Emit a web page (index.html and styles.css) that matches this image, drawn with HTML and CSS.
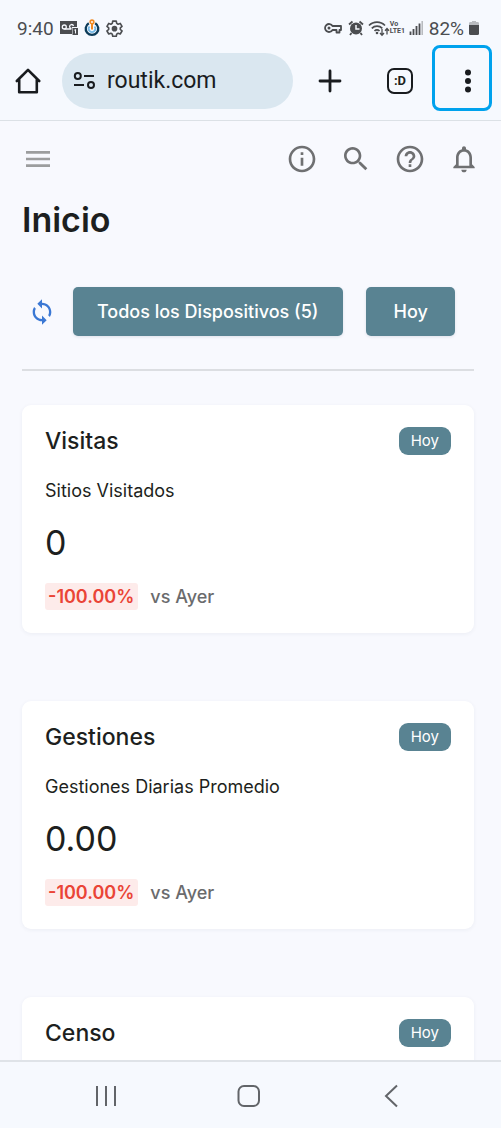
FILE: index.html
```html
<!DOCTYPE html>
<html lang="es">
<head>
<meta charset="utf-8">
<meta name="viewport" content="width=device-width, initial-scale=1">
<title>Inicio</title>
<link rel="stylesheet" href="styles.css">
</head>
<body>
<div class="phone">
  <div class="status">
    <div class="status-group">
      <span class="clock">9:40</span>
      <svg width="18" height="16" viewBox="0 0 18 16" aria-hidden="true"><path fill="#4b4d50" d="M0 1h17v6h-5v7H0z"/><circle cx="4.300" cy="7" r="2" fill="none" stroke="#f6f9fe" stroke-width="1.300"/><path d="M4.300 9h7M11.500 8.500a2 2 0 1 1 2-2.500" fill="none" stroke="#f6f9fe" stroke-width="1.300"/><path fill="#4b4d50" d="M12.500 8H18v7h-5.500z"/><path d="M14.300 10.200l1.200-.7v4" stroke="#f6f9fe" fill="none"/></svg>
      <svg width="16" height="18" viewBox="0 0 16 18" aria-hidden="true"><path d="M4.800 4.200a6.300 6.300 0 1 0 6.400 0" fill="none" stroke="#0c3b59" stroke-width="2.300"/><path d="M5.500 7.500a3.300 3.300 0 1 0 5 0" fill="none" stroke="#75b9e6" stroke-width="1.800"/><path d="M8 10.500V4" stroke="#f08a24" stroke-width="2"/><circle cx="8" cy="3" r="1.800" fill="#fff" stroke="#f08a24" stroke-width="1.700"/></svg>
      <svg width="17" height="17" viewBox="0 0 24 24" aria-hidden="true"><path fill="none" stroke="#4b4d50" stroke-width="2.300" stroke-linejoin="round" d="M9.500 1.500h5l.6 3.200 2 1.200 3-1.100 2.500 4.300-2.400 2.100v2.200l2.400 2.100-2.500 4.300-3-1.100-2 1.200-.6 3.200h-5l-.6-3.200-2-1.200-3 1.100-2.500-4.300 2.400-2.100v-2.200L1.400 9.100l2.500-4.300 3 1.100 2-1.200z"/><circle cx="12" cy="12.200" r="4" fill="#4b4d50"/></svg>
    </div>
    <div class="status-group status-right">
      <svg class="key" width="18" height="16" viewBox="0 0 18 16" aria-hidden="true"><path fill="none" stroke="#4b4d50" stroke-width="1.800" stroke-linejoin="round" d="M8.500 6H17v4h-1.500v2.500h-3V10h-4a4 4 0 1 1 0-4z"/><circle cx="5" cy="8" r="1.500" fill="#4b4d50"/></svg>
      <svg width="16" height="16" viewBox="0 0 16 16" aria-hidden="true"><circle cx="8" cy="8.500" r="6" fill="#4b4d50"/><path d="M1 4.500L4.500 1.500M15 4.500L11.500 1.500M3.500 13l-1.500 2M12.500 13l1.500 2" stroke="#4b4d50" stroke-width="1.800"/><path d="M8 5v4h3.500" fill="none" stroke="#f6f9fe" stroke-width="1.500"/></svg>
      <span class="network">
        <svg width="22" height="18" viewBox="0 0 22 18" aria-hidden="true"><g fill="none" stroke="#4b4d50" stroke-width="1.700"><path d="M1 6.500a11 11 0 0 1 16 0M3.800 9.300a7.300 7.300 0 0 1 10.500 0M6.500 12a3.500 3.500 0 0 1 5 0"/><path stroke-width="1.300" d="M14 10v6M12 14l2 2.200 2-2.200M19 15.500v-6M17 11.700l2-2.200 2 2.200"/></g><circle cx="9" cy="14" r="1.300" fill="#4b4d50"/></svg>
        <span class="lte"><span>Vo</span><span>LTE1</span></span>
      </span>
      <svg width="14" height="16" viewBox="0 0 14 16" aria-hidden="true"><path stroke="#4b4d50" stroke-width="1.800" d="M1.500 11.500V15M4.500 9v6M7.500 6v9M10.500 3.500V15"/><path stroke="#b5b8bc" stroke-width="1.500" d="M13.200 1v14"/></svg>
      <span class="battery">82%</span>
      <svg width="12" height="16" viewBox="0 0 12 16" aria-hidden="true"><path fill="#b9bcc0" d="M4 1h4v1h2q1 0 1 1.500V7H1V3.500Q1 2 2 2h2z"/><path fill="#4b4d50" d="M1 5h10v8.500q0 1.500-1.500 1.500h-7Q1 15 1 13.500z"/></svg>
    </div>
  </div>

  <div class="toolbar">
    <button class="tool" aria-label="Página de inicio"><svg width="28" height="28" viewBox="0 0 28 28"><path fill="none" stroke="#191c1f" stroke-width="2.600" stroke-linejoin="round" stroke-linecap="round" d="M2.800 14L14 2.800 25.200 14M5.200 12.500v12.700h17.600V12.500"/></svg></button>
    <label class="omnibox">
      <svg width="24" height="20" viewBox="0 0 24 20" aria-hidden="true"><g fill="none" stroke="#191c1f" stroke-width="2"><circle cx="4.800" cy="5" r="3"/><path d="M11 5h10M1 14h10"/><circle cx="18" cy="14" r="3"/></g></svg>
      <input class="url" type="text" value="routik.com" aria-label="Dirección">
    </label>
    <button class="tool" aria-label="Nueva pestaña"><svg width="26" height="26" viewBox="0 0 26 26"><path d="M13 3v20M3 13h20" stroke="#191c1f" stroke-width="2.800" stroke-linecap="round"/></svg></button>
    <button class="tabs" aria-label="Pestañas">:D</button>
    <button class="tool more" aria-label="Más opciones"><svg width="8" height="24" viewBox="0 0 8 24"><g fill="#191c1f"><circle cx="4" cy="3.500" r="3"/><circle cx="4" cy="12" r="3"/><circle cx="4" cy="20.500" r="3"/></g></svg></button>
  </div>

  <main class="page">
    <header class="appbar">
      <button class="icon menu" aria-label="Menú"><svg width="32" height="32" viewBox="0 0 24 24"><path fill="#9c9d9e" d="M3 18h18v-2H3zm0-5h18v-2H3zm0-7v2h18V6z"/></svg></button>
      <div class="actions">
        <button class="icon" aria-label="Información"><svg width="32" height="32" viewBox="0 0 24 24"><path d="M11 7h2v2h-2zm0 4h2v6h-2zm1-9C6.480 2 2 6.480 2 12s4.480 10 10 10 10-4.480 10-10S17.520 2 12 2zm0 18c-4.410 0-8-3.590-8-8s3.590-8 8-8 8 3.590 8 8-3.590 8-8 8z"/></svg></button>
        <button class="icon" aria-label="Buscar"><svg width="32" height="32" viewBox="0 0 24 24"><path d="M15.500 14h-.79l-.28-.27C15.410 12.590 16 11.110 16 9.500 16 5.910 13.090 3 9.500 3S3 5.910 3 9.500 5.910 16 9.500 16c1.610 0 3.090-.59 4.230-1.570l.27.28v.79l5 4.990L20.490 19zm-6 0C7.010 14 5 11.990 5 9.500S7.010 5 9.500 5 14 7.010 14 9.500 11.990 14 9.500 14z"/></svg></button>
        <button class="icon" aria-label="Ayuda"><svg width="32" height="32" viewBox="0 0 24 24"><path d="M11 18h2v-2h-2zm1-16C6.480 2 2 6.480 2 12s4.480 10 10 10 10-4.480 10-10S17.520 2 12 2m0 18c-4.410 0-8-3.590-8-8s3.590-8 8-8 8 3.590 8 8-3.590 8-8 8m0-14c-2.210 0-4 1.790-4 4h2c0-1.100.9-2 2-2s2 .9 2 2c0 2-3 1.750-3 5h2c0-2.250 3-2.500 3-5 0-2.210-1.790-4-4-4"/></svg></button>
        <button class="icon" aria-label="Notificaciones"><svg width="32" height="32" viewBox="0 0 24 24"><path d="M12 22c1.100 0 2-.9 2-2h-4c0 1.100.9 2 2 2m6-6v-5c0-3.070-1.630-5.640-4.500-6.320V4c0-.83-.67-1.500-1.500-1.500s-1.500.67-1.500 1.500v.68C7.640 5.360 6 7.920 6 11v5l-2 2v1h16v-1zm-2 1H8v-6c0-2.480 1.510-4.500 4-4.500s4 2.020 4 4.500z"/></svg></button>
      </div>
    </header>
    <div class="content">
      <h1>Inicio</h1>
      <div class="filters">
        <button class="icon sync" aria-label="Actualizar"><svg width="28" height="28" viewBox="0 0 24 24"><path d="M12 4V1L8 5l4 4V6c3.310 0 6 2.690 6 6 0 1.010-.25 1.970-.7 2.800l1.460 1.460C19.540 15.030 20 13.570 20 12c0-4.420-3.580-8-8-8m0 14c-3.310 0-6-2.690-6-6 0-1.010.25-1.970.7-2.800L5.240 7.740C4.460 8.970 4 10.430 4 12c0 4.420 3.580 8 8 8v3l4-4-4-4z"/></svg></button>
        <button class="btn btn-wide">Todos los Dispositivos (5)</button>
        <button class="btn">Hoy</button>
      </div>
      <hr>
      <div class="cards">
        <section class="card">
          <div class="card-head"><h2>Visitas</h2><span class="badge">Hoy</span></div>
          <p class="label">Sitios Visitados</p>
          <p class="value">0</p>
          <p class="trend"><span class="delta">-100.00%</span><span class="versus">vs Ayer</span></p>
        </section>
        <section class="card">
          <div class="card-head"><h2>Gestiones</h2><span class="badge">Hoy</span></div>
          <p class="label">Gestiones Diarias Promedio</p>
          <p class="value">0.00</p>
          <p class="trend"><span class="delta">-100.00%</span><span class="versus">vs Ayer</span></p>
        </section>
        <section class="card">
          <div class="card-head"><h2>Censo</h2><span class="badge">Hoy</span></div>
        </section>
      </div>
    </div>
  </main>

  <nav class="navbar">
    <button class="tool" aria-label="Recientes"><svg width="24" height="24" viewBox="0 0 24 24"><path d="M3 2v20M12 2v20M21 2v20" stroke="#626569" stroke-width="2"/></svg></button>
    <button class="tool" aria-label="Inicio"><svg width="24" height="24" viewBox="0 0 24 24"><rect x="1.500" y="2" width="20.500" height="20" rx="5.500" fill="none" stroke="#626569" stroke-width="2"/></svg></button>
    <button class="tool" aria-label="Atrás"><svg width="24" height="24" viewBox="0 0 24 24"><path d="M18 1.500L7 12l11 10.500" fill="none" stroke="#626569" stroke-width="2"/></svg></button>
  </nav>
</div>
</body>
</html>
```
FILE: styles.css
```css
* { box-sizing: border-box; }
body { margin: 0; font-family: Inter, "Liberation Sans", sans-serif; color: #1d1f20; background: #f8f9fe; }
h1, h2, p { margin: 0; }
svg { display: block; flex: none; }
button { margin: 0; padding: 0; border: 0; background: none; font: inherit; color: inherit; }

.phone { display: flex; flex-direction: column; height: 100vh; overflow: hidden; }

.status { display: flex; justify-content: space-between; align-items: center; height: 44px; padding: 12px 21px 0 17px; background: #f6f9fe; font-family: Roboto, sans-serif; font-size: 19px; color: #4b4d50; }
.status-group { display: flex; align-items: center; gap: 6px; }
.status-right { gap: 4px; }
.key { margin-right: 2px; }
.network { display: flex; align-items: center; }
.lte { display: grid; width: 15px; font-size: 7px; line-height: 7px; font-weight: 700; }
.battery { margin-left: 2px; }

.toolbar { display: flex; align-items: center; height: 77px; padding: 0 14px 3px; border-bottom: 1px solid #dce1e6; background: #f6f9fe; font-family: Roboto, sans-serif; }
.tool { display: flex; align-items: center; justify-content: center; }
.omnibox { display: flex; align-items: center; gap: 10px; flex: 1; min-width: 0; height: 56px; margin: 0 24px 0 20px; padding: 0 11px; border-radius: 28px; background: #dae7f0; }
.url { flex: 1; min-width: 0; padding: 0; border: 0; outline: 0; background: none; font: 23px/28px Roboto, sans-serif; color: #191c1f; }
.tabs { width: 26px; height: 26px; margin: 0 15px 0 44px; border: 2px solid #191c1f; border-radius: 7px; font-size: 13px; line-height: 20px; font-weight: 700; }
.more { position: relative; width: 68px; height: 66px; padding-left: 12px; margin-right: -9px; }
.more::after { content: ""; position: absolute; inset: -3px 4px 3px 4px; border: 3px solid #00a2ed; border-radius: 8px; }

.page { flex: 1; min-height: 0; overflow: hidden; background: #f8f9fe; }
.appbar { display: flex; align-items: center; justify-content: space-between; height: 76px; padding: 0 21px 0 22px; }
.actions { display: flex; gap: 22px; }
.icon { fill: #6f7072; }
.content { padding: 0 27px 0 22px; }
h1 { font-size: 34px; line-height: 46px; font-weight: 600; }
.filters { display: flex; align-items: center; margin-top: 44px; }
.sync { margin: 0 17px 0 6px; fill: #3b78d4; }
.btn { height: 49px; padding: 0 27px; border-radius: 5px; background: #598392; color: #fff; font-size: 18px; font-weight: 500; box-shadow: 0 1px 3px rgba(40, 60, 90, .12); }
.btn-wide { padding: 0 25px 0 24px; margin-right: 23px; }
hr { height: 2px; margin: 33px 0 34px; border: 0; background: #dcdee2; }
.cards { display: grid; gap: 68px; }
.card { min-height: 228px; padding: 22px 23px; border-radius: 9px; background: #fff; box-shadow: 0 1px 4px rgba(40, 50, 90, .06); }
.card-head { display: flex; align-items: center; justify-content: space-between; height: 28px; }
h2 { font-size: 23px; line-height: 28px; font-weight: 500; }
.badge { padding: 0 12px; border-radius: 9px; background: #598392; color: #fff; font-size: 15px; line-height: 28px; }
.label { margin-top: 22px; font-size: 18px; line-height: 28px; }
.value { margin-top: 18px; font-size: 34px; line-height: 40px; }
.trend { display: flex; gap: 12px; margin-top: 20px; font-size: 18px; line-height: 27px; }
.delta { padding: 0 4px 0 3px; border-radius: 3px; background: #fdebea; color: #ea4436; font-weight: 600; }
.versus { color: #6a6b6d; font-weight: 500; }

.navbar { display: flex; justify-content: space-between; align-items: center; height: 68px; padding: 2px 98px 0 94px; border-top: 2px solid #dfe3e8; background: #f6f9fe; }
```
